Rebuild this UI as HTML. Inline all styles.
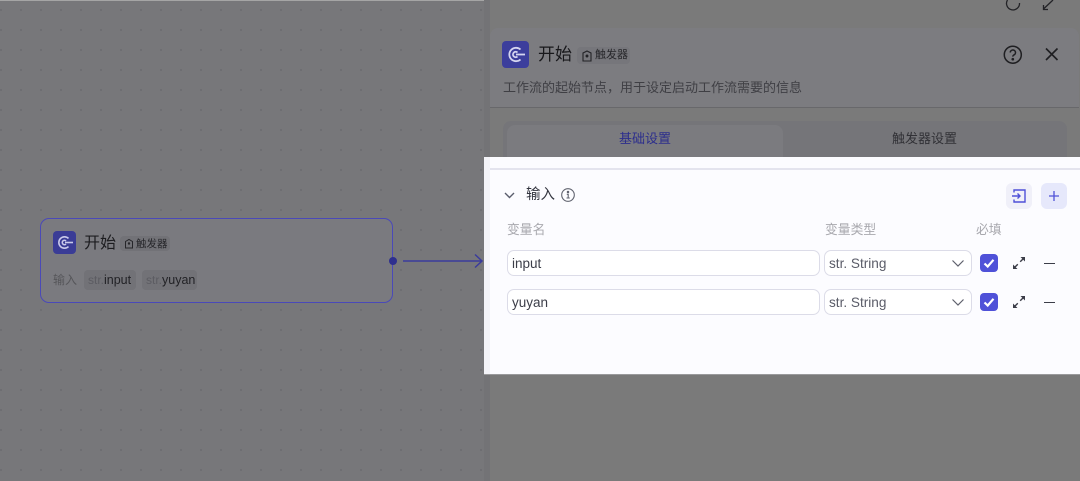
<!DOCTYPE html>
<html><head><meta charset="utf-8"><style>
html,body{margin:0;padding:0;width:1080px;height:481px;overflow:hidden;background:#77777a}
body{position:relative;font-family:"Liberation Sans","Noto Sans CJK SC",sans-serif}
#all{left:0;top:0;width:1080px;height:481px;filter:blur(.35px)}
div,span,svg{position:absolute;box-sizing:border-box;white-space:nowrap}
#dots{left:0;top:0;width:490px;height:481px;background-image:radial-gradient(circle at 1px 1px,#68686c .7px,transparent 1px);background-size:20px 20px;background-position:20px 9px}
.icon{background:#3a3c96;border-radius:4px}
.tag{background:#727277;border-radius:4px}
.t{line-height:1}
.inp{background:#fff;border:1.5px solid #dcdce8;border-radius:7px}
.cb{width:18px;height:18px;background:#4f51d8;border-radius:4px;left:980px}
</style></head><body><div id="all">
<div id="dots"></div>
<div style="left:0;top:0;width:1080px;height:1px;background:#a5a5a5"></div>
<div style="left:490px;top:0;width:590px;height:481px;background:#7a7a7a"></div>
<div style="left:484px;top:0;width:6px;height:481px;background:#737376"></div>

<!-- node -->
<div style="left:40px;top:218px;width:353px;height:85px;border:1.5px solid #4a49b8;border-radius:9px;background:#7a7a7f"></div>
<div class="icon" style="left:53px;top:231px;width:23px;height:23px"></div>
<svg style="left:53px;top:231px" width="23" height="23" viewBox="0 0 23 23" fill="none" stroke="#c9c9ea" stroke-width="1.600"><path d="M15.500 7.400A5.700 5.700 0 1 0 15.500 15.600"/><path d="M13 9.900A2.200 2.200 0 1 0 13 13.100"/><path d="M12 11.500H20"/></svg>
<div class="t" style="left:84px;top:236px;font-size:16px;color:#1d1d20">开始</div>
<div class="tag" style="left:120px;top:236px;width:50px;height:15px"></div>
<svg style="left:124px;top:238px" width="10" height="11" viewBox="0 0 10 11" fill="none" stroke="#26262a" stroke-width="1"><path d="M1.500 3.500L5 1.500l3.500 2V10h-7z"/><circle cx="5" cy="5.500" r=".7" fill="#26262a"/></svg>
<div class="t" style="left:136px;top:239px;font-size:10.500px;color:#26262a">触发器</div>
<div class="t" style="left:53px;top:274px;font-size:12px;color:#56565a">输入</div>
<div class="tag" style="left:84px;top:270px;width:52px;height:20px"></div>
<div class="t" style="left:88px;top:274px;font-size:12px;color:#5c5c62">str.</div>
<div class="t" style="left:104px;top:274px;font-size:12.500px;color:#222226">input</div>
<div class="tag" style="left:142px;top:270px;width:55px;height:20px"></div>
<div class="t" style="left:146px;top:274px;font-size:12px;color:#5c5c62">str.</div>
<div class="t" style="left:162px;top:274px;font-size:12.500px;color:#222226">yuyan</div>
<div style="left:389px;top:257px;width:8px;height:8px;border-radius:50%;background:#2e2f8e"></div>
<svg style="left:400px;top:250px" width="86" height="22" viewBox="0 0 86 22" fill="none" stroke="#3a3b9c" stroke-width="1.500"><path d="M3 11H82M75 4.500L82 11L75 17.500"/></svg>

<!-- top right icons -->
<svg style="left:1000px;top:0" width="60" height="12" viewBox="0 0 60 12" fill="none" stroke="#232327" stroke-width="1.300"><path d="M7.500 0A6.500 6.500 0 1 0 19.500 3"/><path d="M44 8.500L53 0M43.500 5v4.500h4.500"/></svg>

<!-- panel -->
<div style="left:490px;top:28px;width:589px;height:80px;background:#7c7c80;border-radius:8px 8px 0 0;border-bottom:1px solid #68686b"></div>
<div class="icon" style="left:502px;top:41px;width:27px;height:27px;background:#3c3e9c"></div>
<svg style="left:502px;top:41px" width="27" height="27" viewBox="0 0 27 27" fill="none" stroke="#d5d5f0" stroke-width="1.800"><path d="M18.500 8.500A6.700 6.700 0 1 0 18.500 18.500"/><path d="M15.500 11.500A2.700 2.700 0 1 0 15.500 15.500"/><path d="M14 13.500H23"/></svg>
<div class="t" style="left:538px;top:46px;font-size:17px;color:#18181b">开始</div>
<div class="tag" style="left:577px;top:47px;width:53px;height:17px;background:#76767b"></div>
<svg style="left:581px;top:49px" width="12" height="13" viewBox="0 0 12 13" fill="none" stroke="#222226" stroke-width="1.100"><path d="M2 4L6 2L10 4V12H2z"/><circle cx="6" cy="7" r=".9" fill="#222226"/></svg>
<div class="t" style="left:595px;top:50px;font-size:11px;color:#26262a">触发器</div>
<svg style="left:1002px;top:44px" width="22" height="22" viewBox="0 0 22 22" fill="none" stroke="#1f1f22" stroke-width="1.500"><circle cx="10.800" cy="10.700" r="8.500"/><path d="M8.300 8.500A2.600 2.600 0 1 1 11.800 11c-.7.400-1 .8-1 1.600"/><circle cx="10.800" cy="15.200" r=".6" fill="#1f1f22"/></svg>
<svg style="left:1043px;top:46px" width="17" height="17" viewBox="0 0 17 17" fill="none" stroke="#1f1f22" stroke-width="1.600"><path d="M3 2.500L14.500 14M14.500 2.500L3 14"/></svg>
<div class="t" style="left:503px;top:80.500px;font-size:13px;color:#3f3f44">工作流的起始节点，用于设定启动工作流需要的信息</div>
<div style="left:503px;top:121px;width:564px;height:36px;background:#757579;border-radius:8px 8px 0 0"></div>
<div style="left:507px;top:125px;width:276px;height:32px;background:#7b7b7f;border-radius:8px 8px 0 0"></div>
<div class="t" style="left:619px;top:132px;font-size:13px;color:#2c2e8c">基础设置</div>
<div class="t" style="left:892px;top:132px;font-size:13px;color:#313136">触发器设置</div>

<!-- white area -->
<div style="left:484px;top:157px;width:596px;height:217px;background:#fcfcff"></div>
<div style="left:484px;top:157px;width:6px;height:217px;background:#f3f3f8"></div>
<div style="left:490px;top:168px;width:590px;height:2px;background:#e4e4ee"></div>
<div style="left:484px;top:374px;width:596px;height:1px;background:#9a9a9c"></div>

<svg style="left:503px;top:190px" width="13" height="11" viewBox="0 0 13 11" fill="none" stroke="#5a5d6c" stroke-width="1.400"><path d="M2 3L6.500 7.500L11 3"/></svg>
<div class="t" style="left:526px;top:187.500px;font-size:14.500px;color:#33353f">输入</div>
<svg style="left:560px;top:187px" width="16" height="16" viewBox="0 0 16 16" fill="none" stroke="#60636f" stroke-width="1.100"><circle cx="8" cy="8" r="6.300"/><path d="M6.800 7.300H8.200V11M6.500 11H9.800"/><circle cx="8" cy="5" r=".7" fill="#60636f"/></svg>
<div style="left:1006px;top:183px;width:26px;height:26px;background:#f0f0f9;border-radius:6px"></div>
<svg style="left:1006px;top:183px" width="26" height="26" viewBox="0 0 26 26" fill="none" stroke="#4f51d8" stroke-width="1.400"><path d="M8 9.500V7H19V19H8V16.500"/><path d="M6 13H14M11.500 10.500L14 13L11.500 15.500"/></svg>
<div style="left:1041px;top:183px;width:26px;height:26px;background:#e6e8fb;border-radius:6px"></div>
<svg style="left:1041px;top:183px" width="26" height="26" viewBox="0 0 26 26" fill="none" stroke="#4f51d8" stroke-width="1.300"><path d="M13 8V18M8 13H18"/></svg>

<div class="t" style="left:507px;top:224px;font-size:12.800px;color:#a8a8ae">变量名</div>
<div class="t" style="left:825px;top:224px;font-size:12.800px;color:#a8a8ae">变量类型</div>
<div class="t" style="left:976px;top:224px;font-size:12.800px;color:#a8a8ae">必填</div>

<div class="inp" style="left:507px;top:250px;width:313px;height:26px"></div>
<div class="t" style="left:512px;top:257px;font-size:13.500px;color:#3b3d48">input</div>
<div class="inp" style="left:507px;top:289px;width:313px;height:26px"></div>
<div class="t" style="left:512px;top:296px;font-size:13.500px;color:#3b3d48">yuyan</div>

<div class="inp" style="left:824px;top:250px;width:148px;height:26px"></div>
<div class="t" style="left:829px;top:257px;font-size:13.600px;color:#5a5c68">str. String</div>
<svg style="left:951px;top:258px" width="14" height="11" viewBox="0 0 14 11" fill="none" stroke="#5e606c" stroke-width="1.200"><path d="M1.500 2.500L7 8L12.500 2.500"/></svg>
<div class="inp" style="left:824px;top:289px;width:148px;height:26px"></div>
<div class="t" style="left:829px;top:296px;font-size:13.600px;color:#5a5c68">str. String</div>
<svg style="left:951px;top:297px" width="14" height="11" viewBox="0 0 14 11" fill="none" stroke="#5e606c" stroke-width="1.200"><path d="M1.500 2.500L7 8L12.500 2.500"/></svg>

<div class="cb" style="top:254px"></div>
<svg style="left:980px;top:254px" width="18" height="18" viewBox="0 0 18 18" fill="none" stroke="#fff" stroke-width="2.200"><path d="M4.500 9.500L7.700 12.500L13.500 5.800"/></svg>
<div class="cb" style="top:293px"></div>
<svg style="left:980px;top:293px" width="18" height="18" viewBox="0 0 18 18" fill="none" stroke="#fff" stroke-width="2.200"><path d="M4.500 9.500L7.700 12.500L13.500 5.800"/></svg>

<svg style="left:1012px;top:256px" width="14" height="14" viewBox="0 0 14 14" fill="none" stroke="#3b3d48" stroke-width="1.400"><path d="M2.500 11.500L5.800 8.200M8.200 5.800L11.500 2.500"/><path d="M1 8.500V13H5.500z M8.500 1H13V5.500z" fill="#3b3d48" stroke="none"/></svg>
<svg style="left:1012px;top:295px" width="14" height="14" viewBox="0 0 14 14" fill="none" stroke="#3b3d48" stroke-width="1.400"><path d="M2.500 11.500L5.800 8.200M8.200 5.800L11.500 2.500"/><path d="M1 8.500V13H5.500z M8.500 1H13V5.500z" fill="#3b3d48" stroke="none"/></svg>
<div style="left:1044px;top:262.500px;width:11px;height:1.300px;background:#3b3d48"></div>
<div style="left:1044px;top:301.500px;width:11px;height:1.300px;background:#3b3d48"></div>
</div></body></html>
